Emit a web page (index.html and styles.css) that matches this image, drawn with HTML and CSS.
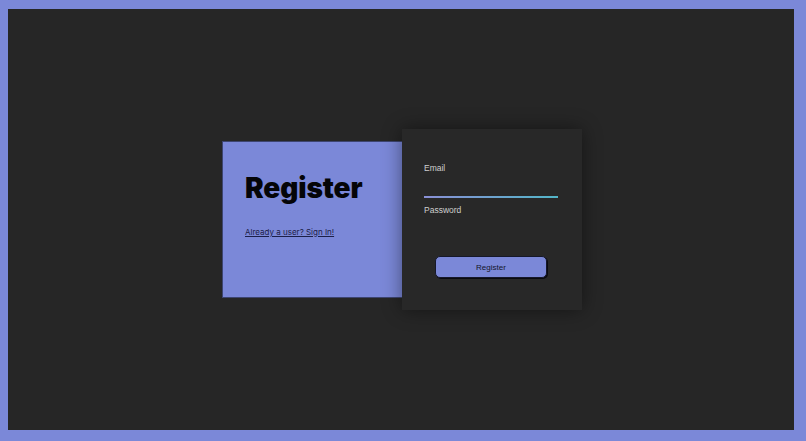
FILE: index.html
```html
<!DOCTYPE html>
<html>
<head>
<meta charset="utf-8">
<link rel="stylesheet" href="styles.css">
</head>
<body>
<div class="frame">
  <div class="group">
    <div class="intro">
      <h1 class="title">Register</h1>
      <a class="link" href="#">Already a user? Sign In!</a>
    </div>
    <form class="card">
      <label class="label">Email</label>
      <div class="field"></div>
      <label class="label pw">Password</label>
      <div class="field empty"></div>
      <button class="btn" type="button">Register</button>
    </form>
  </div>
</div>
</body>
</html>
```
FILE: styles.css
```css
html, body {
  margin: 0;
  padding: 0;
  height: 100%;
}
body {
  background: #7b88d8;
  font-family: Inter, "Liberation Sans", sans-serif;
  padding: 9px 12px 11px 8px;
  box-sizing: border-box;
}
.frame {
  background: #262626;
  height: 100%;
  display: flex;
  align-items: center;
  justify-content: center;
}
.group {
  display: flex;
  align-items: center;
  margin-left: 2px;
}
.intro {
  width: 180px;
  height: 157px;
  box-sizing: border-box;
  background: #7b88d8;
  padding: 29px 0 0 22px;
  border: 1px solid #3d4570;
  border-right: none;
}
.title {
  margin: 0;
  font-size: 28px;
  font-weight: 900;
  line-height: 34px;
  color: #050508;
  letter-spacing: -0.1px;
}
.link {
  display: block;
  margin-top: 22px;
  font-size: 8px;
  color: #1c2048;
  text-decoration: underline;
}
.card {
  width: 180px;
  height: 181px;
  box-sizing: border-box;
  background: #282828;
  padding: 34px 24px 0 22px;
  margin: 0;
  box-shadow: 0 0 18px rgba(0, 0, 0, 0.45);
  display: flex;
  flex-direction: column;
}
.label {
  font-family: "Liberation Sans", Arial, sans-serif;
  font-size: 8.5px;
  line-height: 11px;
  color: #cfcfcf;
}
.field {
  height: 22px;
  border-bottom: 2px solid transparent;
  border-image: linear-gradient(90deg, #8a8fd6, #52b6c8) 1;
  margin-bottom: 7px;
}
.field.empty {
  border: none;
  height: 0;
  margin: 0;
}
.btn {
  margin: 40px auto 0;
  width: 112px;
  height: 22px;
  background: #7b88d8;
  border: 1px solid #16182a;
  border-radius: 5px;
  box-shadow: 1px 1px 0 #0a0a10;
  font-family: "Liberation Sans", Arial, sans-serif;
  font-size: 8px;
  color: #14162a;
  padding: 0;
}
```
